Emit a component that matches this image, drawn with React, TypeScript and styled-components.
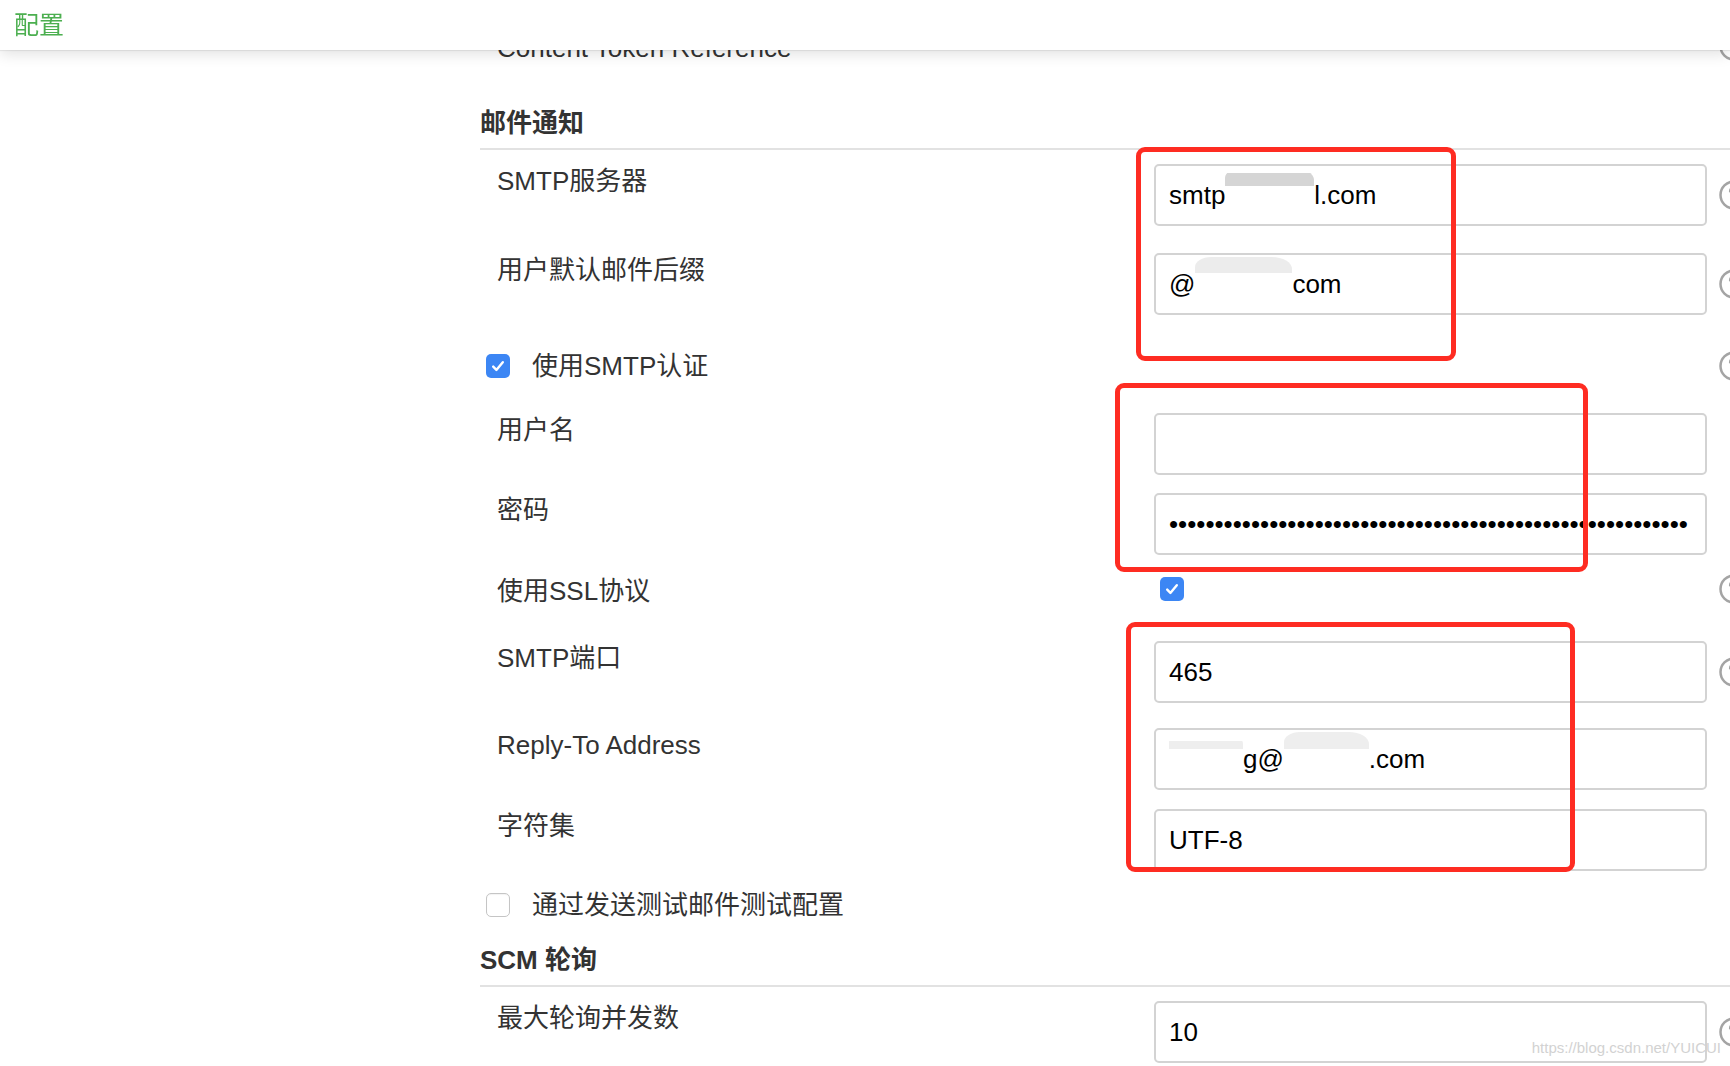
import React from "react";
import styled, { createGlobalStyle, css } from "styled-components";

const GlobalStyle = createGlobalStyle`
  html, body { margin: 0; padding: 0; background: #fff; overflow: hidden; }
  body { font-family: "Liberation Sans", "Noto Sans CJK SC", sans-serif; color: #333; }
  * { box-sizing: border-box; }
`;

const Page = styled.div`
  position: relative;
  width: 1730px;
  height: 1066px;
  overflow: hidden;
  background: #fff;
`;

const TopBar = styled.header`
  position: fixed;
  top: 0;
  left: 0;
  right: 0;
  height: 50px;
  z-index: 5;
  display: flex;
  align-items: center;
  padding-left: 14px;
  background: #fff;
  box-shadow: 0 1px 1px rgba(0, 0, 0, 0.07), 0 4px 14px rgba(0, 0, 0, 0.12);
`;

const TopTitle = styled.div`
  font-size: 25px;
  line-height: 30px;
  color: #4caf50;
`;

const Main = styled.main`
  display: flex;
  flex-direction: column;
  padding: 31px 0 0 480px;
`;

const SectionTitle = styled.h2`
  margin: 0;
  padding-bottom: 10px;
  font-size: 26px;
  line-height: 30px;
  font-weight: 700;
  color: #333;
`;

const Divider = styled.hr`
  margin: 0 0 14px;
  border: 0;
  height: 2px;
  background: #e2e2e2;
`;

const Row = styled.div<{ $pitch: number }>`
  display: grid;
  grid-template-columns: 674px 553px 23px;
  align-items: start;
  height: ${(p) => p.$pitch}px;
`;

const CheckRow = styled.div<{ $pitch: number }>`
  display: grid;
  grid-template-columns: 1227px 23px;
  align-items: start;
  height: ${(p) => p.$pitch}px;
`;

const Label = styled.div`
  padding: 2px 0 0 17px;
  font-size: 26px;
  line-height: 30px;
  color: #333;
  white-space: nowrap;
`;

const CheckLabel = styled.label`
  display: flex;
  align-items: center;
  gap: 22px;
  height: 30px;
  padding-left: 6px;
  font-size: 26px;
  line-height: 30px;
  color: #333;
`;

const fieldBase = css`
  display: block;
  width: 100%;
  height: 62px;
  margin: 0;
  padding: 0 13px;
  border: 2px solid #d3d3d3;
  border-radius: 5px;
  background: #fff;
  font-family: "Liberation Sans", "Noto Sans CJK SC", sans-serif;
  font-size: 26px;
  color: #000;
`;

const TextInput = styled.input`
  ${fieldBase};
  outline: none;
`;

const MaskedField = styled.div`
  ${fieldBase};
  line-height: 58px;
  white-space: pre;
  overflow: hidden;
`;

const Redaction = styled.span<{ $w: number; $tone: string; $from: number; $to: number }>`
  display: inline-block;
  width: ${(p) => p.$w}px;
  height: 40px;
  vertical-align: -4px;
  border-radius: 16px 20px 0 0 / 10px 12px 0 0;
  background: linear-gradient(
    to bottom,
    #fff 0 ${(p) => p.$from}px,
    ${(p) => p.$tone} ${(p) => p.$from}px ${(p) => p.$to}px,
    #fff ${(p) => p.$to}px
  );
`;

const CheckCell = styled.div`
  display: flex;
  align-items: center;
  height: 30px;
  padding-left: 6px;
`;

const HelpCell = styled.div<{ $h: number }>`
  display: flex;
  align-items: center;
  width: 60px;
  height: ${(p) => p.$h}px;
  padding-left: 12px;
`;

const HelpSvg = styled.svg`
  flex: none;
  width: 30px;
  height: 30px;
`;

const Box = styled.span<{ $checked?: boolean }>`
  flex: none;
  display: inline-flex;
  align-items: center;
  justify-content: center;
  width: 24px;
  height: 24px;
  border-radius: 5px;
  ${(p) =>
    p.$checked
      ? css`
          background: #3c86f4;
        `
      : css`
          background: #fff;
          border: 1.5px solid #c5c5c5;
          box-shadow: inset 0 1px 1px rgba(0, 0, 0, 0.05);
        `}
`;

const Annotation = styled.div<{ $x: number; $y: number; $w: number; $h: number }>`
  position: absolute;
  left: ${(p) => p.$x}px;
  top: ${(p) => p.$y}px;
  width: ${(p) => p.$w}px;
  height: ${(p) => p.$h}px;
  border: 5px solid #fe2c22;
  border-radius: 9px;
  pointer-events: none;
  z-index: 3;
`;

const Watermark = styled.div`
  position: absolute;
  right: 9px;
  bottom: 10px;
  font-family: "Liberation Sans", sans-serif;
  font-size: 15px;
  color: #d2d2d2;
  z-index: 4;
`;

const CheckBox = ({ checked }: { checked?: boolean }) => (
  <Box $checked={checked}>
    {checked && (
      <svg width="16" height="16" viewBox="0 0 16 16">
        <path d="M3.2 8.6l3.2 3.3L12.8 4.2" fill="none" stroke="#fff" strokeWidth="2.4" strokeLinecap="round" strokeLinejoin="round" />
      </svg>
    )}
  </Box>
);

const HelpIcon = () => (
  <HelpSvg viewBox="0 0 30 30">
    <circle cx="15" cy="15" r="13.5" fill="none" stroke="#a4a4a4" strokeWidth="2.5" />
    <path d="M11 11.5a4 4 0 1 1 5.5 3.7c-1 .5-1.5 1.2-1.5 2.3v1M15 21.5v.5" fill="none" stroke="#a4a4a4" strokeWidth="2.2" strokeLinecap="round" />
  </HelpSvg>
);

const Help = ({ h = 62 }: { h?: number }) => (
  <HelpCell $h={h}>
    <HelpIcon />
  </HelpCell>
);

export default function App() {
  return (
    <Page>
      <GlobalStyle />
      <TopBar>
        <TopTitle>配置</TopTitle>
      </TopBar>
      <Main>
        <Row $pitch={77}>
          <Label>Content Token Reference</Label>
          <div />
          <Help h={30} />
        </Row>

        <SectionTitle>邮件通知</SectionTitle>
        <Divider />

        <Row $pitch={89}>
          <Label>SMTP服务器</Label>
          <MaskedField>
            smtp<Redaction $w={89} $tone="#d5d5d5" $from={5} $to={18} />l.com
          </MaskedField>
          <Help />
        </Row>
        <Row $pitch={98}>
          <Label>用户默认邮件后缀</Label>
          <MaskedField>
            @<Redaction $w={97} $tone="#ececec" $from={0} $to={16} />com
          </MaskedField>
          <Help />
        </Row>
        <CheckRow $pitch={62}>
          <CheckLabel>
            <CheckBox checked />
            使用SMTP认证
          </CheckLabel>
          <Help h={30} />
        </CheckRow>
        <Row $pitch={80}>
          <Label>用户名</Label>
          <TextInput type="text" defaultValue="" readOnly />
        </Row>
        <Row $pitch={81}>
          <Label>密码</Label>
          <TextInput type="password" defaultValue={"x".repeat(57)} readOnly />
        </Row>
        <Row $pitch={67}>
          <Label>使用SSL协议</Label>
          <CheckCell>
            <CheckBox checked />
          </CheckCell>
          <Help h={30} />
        </Row>
        <Row $pitch={87}>
          <Label>SMTP端口</Label>
          <TextInput type="text" defaultValue="465" readOnly />
          <Help />
        </Row>
        <Row $pitch={81}>
          <Label>Reply-To Address</Label>
          <MaskedField>
            <Redaction $w={74} $tone="#eeeeee" $from={9} $to={17} />g@
            <Redaction $w={85} $tone="#eeeeee" $from={0} $to={17} />.com
          </MaskedField>
        </Row>
        <Row $pitch={81}>
          <Label>字符集</Label>
          <TextInput type="text" defaultValue="UTF-8" readOnly />
        </Row>
        <CheckRow $pitch={55}>
          <CheckLabel>
            <CheckBox />
            通过发送测试邮件测试配置
          </CheckLabel>
        </CheckRow>

        <SectionTitle>SCM 轮询</SectionTitle>
        <Divider />

        <Row $pitch={70}>
          <Label>最大轮询并发数</Label>
          <TextInput type="text" defaultValue="10" readOnly />
          <Help />
        </Row>
      </Main>

      <Annotation $x={1136} $y={147} $w={320} $h={214} />
      <Annotation $x={1115} $y={383} $w={473} $h={189} />
      <Annotation $x={1126} $y={622} $w={449} $h={250} />

      <Watermark>https://blog.csdn.net/YUICUI</Watermark>
    </Page>
  );
}
